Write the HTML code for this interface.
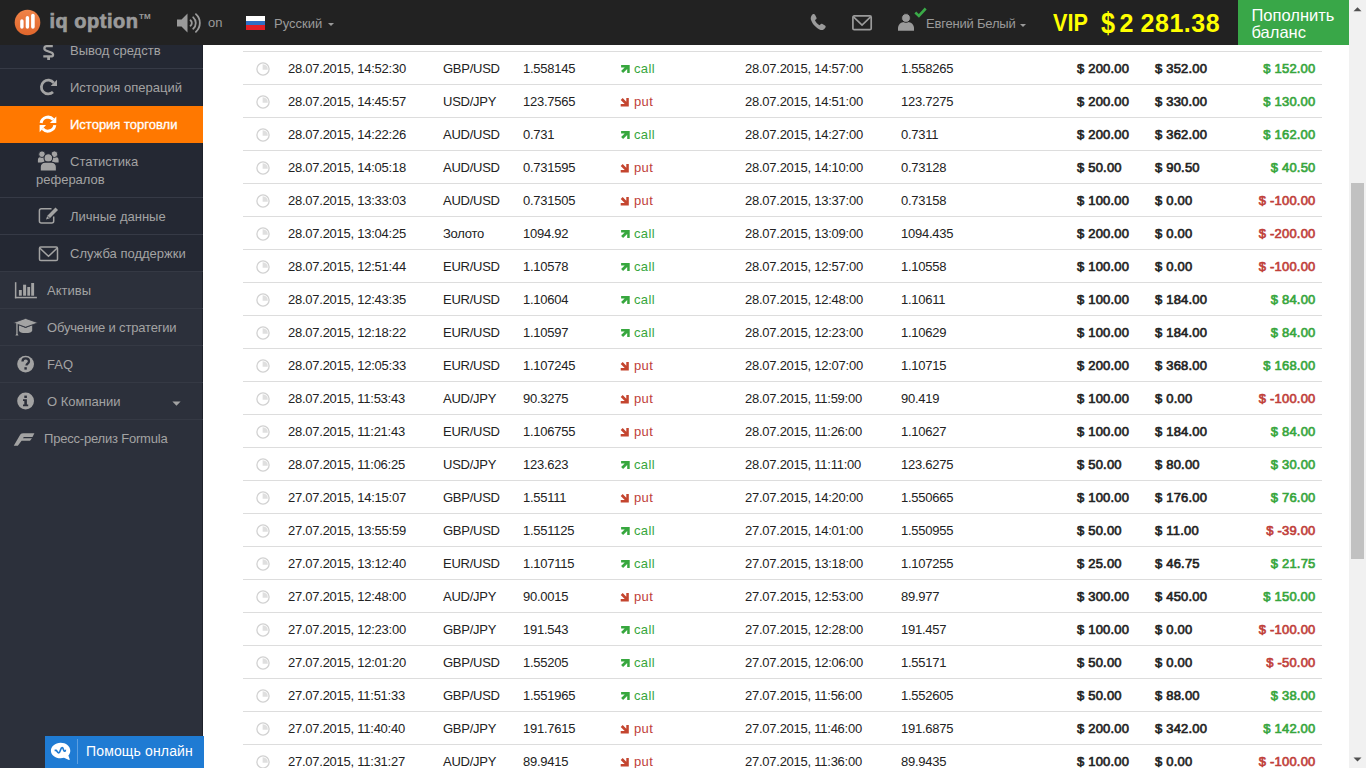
<!DOCTYPE html>
<html><head><meta charset="utf-8">
<style>
*{margin:0;padding:0;box-sizing:border-box}
html,body{width:1366px;height:768px;overflow:hidden;background:#fff;font-family:"Liberation Sans",sans-serif}
.abs{position:absolute}
.hd{font-size:13px;color:#9a9a9a;white-space:nowrap;line-height:16px}
.caret{width:0;height:0;border-left:3.5px solid transparent;border-right:3.5px solid transparent;border-top:3.5px solid #9a9a9a}
#hdr{position:absolute;left:0;top:0;width:1349px;height:45px;background:#222222}
#sb{position:absolute;left:0;top:45px;width:203px;height:723px;background:#2c303b;overflow:hidden;box-shadow:inset -1px 0 0 #1e212a}
.si{position:absolute;left:0;width:202px;color:#a3a3a3;font-size:13px;white-space:nowrap}
.sub{background:#242833}
.ln{position:absolute;left:0;width:203px;height:1px}
.lbl{position:absolute;white-space:nowrap}
#scroll{position:absolute;left:1349px;top:0;width:17px;height:768px;background:#f1f1f1}
.tr{position:absolute;left:243px;width:1079px;height:33px;border-top:1px solid #dddddd;font-size:13px;color:#222}
.tr span{position:absolute;top:9px;white-space:nowrap;letter-spacing:-0.25px;line-height:16px}
.tr .ck{position:absolute;left:12.6px;top:10.2px}
.tr .ar{position:absolute;left:377px;top:10px}
.c1{left:45px}.c2{left:200px}.c3{left:280px}.tr .c4{left:391px;letter-spacing:0.35px}.c5{left:502px}.c6{left:658px}
.tr .c7,.tr .c8,.tr .c9{-webkit-text-stroke:0.65px currentColor;letter-spacing:0.2px}.c7{left:834px}.c8{left:912px}.c9{right:6.5px}
.g{color:#37a63d}.r{color:#c0403a}
</style></head><body>
<div id="main">
<div class="tr" style="top:51px"><svg class="ck" width="14" height="14" viewBox="0 0 14 14"><circle cx="7" cy="7" r="6.1" fill="none" stroke="#d2d2d2" stroke-width="1.3"/><path d="M6.6 2.3V7.7H11.8A5 5 0 0 0 6.6 2.3z" fill="#dfdfdf"/></svg><span class="c1">28.07.2015, 14:52:30</span><span class="c2">GBP/USD</span><span class="c3">1.558145</span><svg class="ar" width="12" height="14" viewBox="0 0 12 14"><path d="M1.1 3H9.7V11.1H7.2V7L3.1 11.1 1.1 9.1 4.7 5.5H1.1z" fill="#37a73e"/></svg><span class="c4 g">call</span><span class="c5">28.07.2015, 14:57:00</span><span class="c6">1.558265</span><span class="c7">$ 200.00</span><span class="c8">$ 352.00</span><span class="c9 g">$ 152.00</span></div>
<div class="tr" style="top:84px"><svg class="ck" width="14" height="14" viewBox="0 0 14 14"><circle cx="7" cy="7" r="6.1" fill="none" stroke="#d2d2d2" stroke-width="1.3"/><path d="M6.6 2.3V7.7H11.8A5 5 0 0 0 6.6 2.3z" fill="#dfdfdf"/></svg><span class="c1">28.07.2015, 14:45:57</span><span class="c2">USD/JPY</span><span class="c3">123.7565</span><svg class="ar" width="12" height="14" viewBox="0 0 12 14"><path d="M0.7 11.6H8.8V3.1H6.3V6.7L2.7 3.1 0.7 5.1 4.7 9.1H0.7z" fill="#c4452f"/></svg><span class="c4 r">put</span><span class="c5">28.07.2015, 14:51:00</span><span class="c6">123.7275</span><span class="c7">$ 200.00</span><span class="c8">$ 330.00</span><span class="c9 g">$ 130.00</span></div>
<div class="tr" style="top:117px"><svg class="ck" width="14" height="14" viewBox="0 0 14 14"><circle cx="7" cy="7" r="6.1" fill="none" stroke="#d2d2d2" stroke-width="1.3"/><path d="M6.6 2.3V7.7H11.8A5 5 0 0 0 6.6 2.3z" fill="#dfdfdf"/></svg><span class="c1">28.07.2015, 14:22:26</span><span class="c2">AUD/USD</span><span class="c3">0.731</span><svg class="ar" width="12" height="14" viewBox="0 0 12 14"><path d="M1.1 3H9.7V11.1H7.2V7L3.1 11.1 1.1 9.1 4.7 5.5H1.1z" fill="#37a73e"/></svg><span class="c4 g">call</span><span class="c5">28.07.2015, 14:27:00</span><span class="c6">0.7311</span><span class="c7">$ 200.00</span><span class="c8">$ 362.00</span><span class="c9 g">$ 162.00</span></div>
<div class="tr" style="top:150px"><svg class="ck" width="14" height="14" viewBox="0 0 14 14"><circle cx="7" cy="7" r="6.1" fill="none" stroke="#d2d2d2" stroke-width="1.3"/><path d="M6.6 2.3V7.7H11.8A5 5 0 0 0 6.6 2.3z" fill="#dfdfdf"/></svg><span class="c1">28.07.2015, 14:05:18</span><span class="c2">AUD/USD</span><span class="c3">0.731595</span><svg class="ar" width="12" height="14" viewBox="0 0 12 14"><path d="M0.7 11.6H8.8V3.1H6.3V6.7L2.7 3.1 0.7 5.1 4.7 9.1H0.7z" fill="#c4452f"/></svg><span class="c4 r">put</span><span class="c5">28.07.2015, 14:10:00</span><span class="c6">0.73128</span><span class="c7">$ 50.00</span><span class="c8">$ 90.50</span><span class="c9 g">$ 40.50</span></div>
<div class="tr" style="top:183px"><svg class="ck" width="14" height="14" viewBox="0 0 14 14"><circle cx="7" cy="7" r="6.1" fill="none" stroke="#d2d2d2" stroke-width="1.3"/><path d="M6.6 2.3V7.7H11.8A5 5 0 0 0 6.6 2.3z" fill="#dfdfdf"/></svg><span class="c1">28.07.2015, 13:33:03</span><span class="c2">AUD/USD</span><span class="c3">0.731505</span><svg class="ar" width="12" height="14" viewBox="0 0 12 14"><path d="M0.7 11.6H8.8V3.1H6.3V6.7L2.7 3.1 0.7 5.1 4.7 9.1H0.7z" fill="#c4452f"/></svg><span class="c4 r">put</span><span class="c5">28.07.2015, 13:37:00</span><span class="c6">0.73158</span><span class="c7">$ 100.00</span><span class="c8">$ 0.00</span><span class="c9 r">$ -100.00</span></div>
<div class="tr" style="top:216px"><svg class="ck" width="14" height="14" viewBox="0 0 14 14"><circle cx="7" cy="7" r="6.1" fill="none" stroke="#d2d2d2" stroke-width="1.3"/><path d="M6.6 2.3V7.7H11.8A5 5 0 0 0 6.6 2.3z" fill="#dfdfdf"/></svg><span class="c1">28.07.2015, 13:04:25</span><span class="c2">Золото</span><span class="c3">1094.92</span><svg class="ar" width="12" height="14" viewBox="0 0 12 14"><path d="M1.1 3H9.7V11.1H7.2V7L3.1 11.1 1.1 9.1 4.7 5.5H1.1z" fill="#37a73e"/></svg><span class="c4 g">call</span><span class="c5">28.07.2015, 13:09:00</span><span class="c6">1094.435</span><span class="c7">$ 200.00</span><span class="c8">$ 0.00</span><span class="c9 r">$ -200.00</span></div>
<div class="tr" style="top:249px"><svg class="ck" width="14" height="14" viewBox="0 0 14 14"><circle cx="7" cy="7" r="6.1" fill="none" stroke="#d2d2d2" stroke-width="1.3"/><path d="M6.6 2.3V7.7H11.8A5 5 0 0 0 6.6 2.3z" fill="#dfdfdf"/></svg><span class="c1">28.07.2015, 12:51:44</span><span class="c2">EUR/USD</span><span class="c3">1.10578</span><svg class="ar" width="12" height="14" viewBox="0 0 12 14"><path d="M1.1 3H9.7V11.1H7.2V7L3.1 11.1 1.1 9.1 4.7 5.5H1.1z" fill="#37a73e"/></svg><span class="c4 g">call</span><span class="c5">28.07.2015, 12:57:00</span><span class="c6">1.10558</span><span class="c7">$ 100.00</span><span class="c8">$ 0.00</span><span class="c9 r">$ -100.00</span></div>
<div class="tr" style="top:282px"><svg class="ck" width="14" height="14" viewBox="0 0 14 14"><circle cx="7" cy="7" r="6.1" fill="none" stroke="#d2d2d2" stroke-width="1.3"/><path d="M6.6 2.3V7.7H11.8A5 5 0 0 0 6.6 2.3z" fill="#dfdfdf"/></svg><span class="c1">28.07.2015, 12:43:35</span><span class="c2">EUR/USD</span><span class="c3">1.10604</span><svg class="ar" width="12" height="14" viewBox="0 0 12 14"><path d="M1.1 3H9.7V11.1H7.2V7L3.1 11.1 1.1 9.1 4.7 5.5H1.1z" fill="#37a73e"/></svg><span class="c4 g">call</span><span class="c5">28.07.2015, 12:48:00</span><span class="c6">1.10611</span><span class="c7">$ 100.00</span><span class="c8">$ 184.00</span><span class="c9 g">$ 84.00</span></div>
<div class="tr" style="top:315px"><svg class="ck" width="14" height="14" viewBox="0 0 14 14"><circle cx="7" cy="7" r="6.1" fill="none" stroke="#d2d2d2" stroke-width="1.3"/><path d="M6.6 2.3V7.7H11.8A5 5 0 0 0 6.6 2.3z" fill="#dfdfdf"/></svg><span class="c1">28.07.2015, 12:18:22</span><span class="c2">EUR/USD</span><span class="c3">1.10597</span><svg class="ar" width="12" height="14" viewBox="0 0 12 14"><path d="M1.1 3H9.7V11.1H7.2V7L3.1 11.1 1.1 9.1 4.7 5.5H1.1z" fill="#37a73e"/></svg><span class="c4 g">call</span><span class="c5">28.07.2015, 12:23:00</span><span class="c6">1.10629</span><span class="c7">$ 100.00</span><span class="c8">$ 184.00</span><span class="c9 g">$ 84.00</span></div>
<div class="tr" style="top:348px"><svg class="ck" width="14" height="14" viewBox="0 0 14 14"><circle cx="7" cy="7" r="6.1" fill="none" stroke="#d2d2d2" stroke-width="1.3"/><path d="M6.6 2.3V7.7H11.8A5 5 0 0 0 6.6 2.3z" fill="#dfdfdf"/></svg><span class="c1">28.07.2015, 12:05:33</span><span class="c2">EUR/USD</span><span class="c3">1.107245</span><svg class="ar" width="12" height="14" viewBox="0 0 12 14"><path d="M0.7 11.6H8.8V3.1H6.3V6.7L2.7 3.1 0.7 5.1 4.7 9.1H0.7z" fill="#c4452f"/></svg><span class="c4 r">put</span><span class="c5">28.07.2015, 12:07:00</span><span class="c6">1.10715</span><span class="c7">$ 200.00</span><span class="c8">$ 368.00</span><span class="c9 g">$ 168.00</span></div>
<div class="tr" style="top:381px"><svg class="ck" width="14" height="14" viewBox="0 0 14 14"><circle cx="7" cy="7" r="6.1" fill="none" stroke="#d2d2d2" stroke-width="1.3"/><path d="M6.6 2.3V7.7H11.8A5 5 0 0 0 6.6 2.3z" fill="#dfdfdf"/></svg><span class="c1">28.07.2015, 11:53:43</span><span class="c2">AUD/JPY</span><span class="c3">90.3275</span><svg class="ar" width="12" height="14" viewBox="0 0 12 14"><path d="M0.7 11.6H8.8V3.1H6.3V6.7L2.7 3.1 0.7 5.1 4.7 9.1H0.7z" fill="#c4452f"/></svg><span class="c4 r">put</span><span class="c5">28.07.2015, 11:59:00</span><span class="c6">90.419</span><span class="c7">$ 100.00</span><span class="c8">$ 0.00</span><span class="c9 r">$ -100.00</span></div>
<div class="tr" style="top:414px"><svg class="ck" width="14" height="14" viewBox="0 0 14 14"><circle cx="7" cy="7" r="6.1" fill="none" stroke="#d2d2d2" stroke-width="1.3"/><path d="M6.6 2.3V7.7H11.8A5 5 0 0 0 6.6 2.3z" fill="#dfdfdf"/></svg><span class="c1">28.07.2015, 11:21:43</span><span class="c2">EUR/USD</span><span class="c3">1.106755</span><svg class="ar" width="12" height="14" viewBox="0 0 12 14"><path d="M0.7 11.6H8.8V3.1H6.3V6.7L2.7 3.1 0.7 5.1 4.7 9.1H0.7z" fill="#c4452f"/></svg><span class="c4 r">put</span><span class="c5">28.07.2015, 11:26:00</span><span class="c6">1.10627</span><span class="c7">$ 100.00</span><span class="c8">$ 184.00</span><span class="c9 g">$ 84.00</span></div>
<div class="tr" style="top:447px"><svg class="ck" width="14" height="14" viewBox="0 0 14 14"><circle cx="7" cy="7" r="6.1" fill="none" stroke="#d2d2d2" stroke-width="1.3"/><path d="M6.6 2.3V7.7H11.8A5 5 0 0 0 6.6 2.3z" fill="#dfdfdf"/></svg><span class="c1">28.07.2015, 11:06:25</span><span class="c2">USD/JPY</span><span class="c3">123.623</span><svg class="ar" width="12" height="14" viewBox="0 0 12 14"><path d="M1.1 3H9.7V11.1H7.2V7L3.1 11.1 1.1 9.1 4.7 5.5H1.1z" fill="#37a73e"/></svg><span class="c4 g">call</span><span class="c5">28.07.2015, 11:11:00</span><span class="c6">123.6275</span><span class="c7">$ 50.00</span><span class="c8">$ 80.00</span><span class="c9 g">$ 30.00</span></div>
<div class="tr" style="top:480px"><svg class="ck" width="14" height="14" viewBox="0 0 14 14"><circle cx="7" cy="7" r="6.1" fill="none" stroke="#d2d2d2" stroke-width="1.3"/><path d="M6.6 2.3V7.7H11.8A5 5 0 0 0 6.6 2.3z" fill="#dfdfdf"/></svg><span class="c1">27.07.2015, 14:15:07</span><span class="c2">GBP/USD</span><span class="c3">1.55111</span><svg class="ar" width="12" height="14" viewBox="0 0 12 14"><path d="M0.7 11.6H8.8V3.1H6.3V6.7L2.7 3.1 0.7 5.1 4.7 9.1H0.7z" fill="#c4452f"/></svg><span class="c4 r">put</span><span class="c5">27.07.2015, 14:20:00</span><span class="c6">1.550665</span><span class="c7">$ 100.00</span><span class="c8">$ 176.00</span><span class="c9 g">$ 76.00</span></div>
<div class="tr" style="top:513px"><svg class="ck" width="14" height="14" viewBox="0 0 14 14"><circle cx="7" cy="7" r="6.1" fill="none" stroke="#d2d2d2" stroke-width="1.3"/><path d="M6.6 2.3V7.7H11.8A5 5 0 0 0 6.6 2.3z" fill="#dfdfdf"/></svg><span class="c1">27.07.2015, 13:55:59</span><span class="c2">GBP/USD</span><span class="c3">1.551125</span><svg class="ar" width="12" height="14" viewBox="0 0 12 14"><path d="M1.1 3H9.7V11.1H7.2V7L3.1 11.1 1.1 9.1 4.7 5.5H1.1z" fill="#37a73e"/></svg><span class="c4 g">call</span><span class="c5">27.07.2015, 14:01:00</span><span class="c6">1.550955</span><span class="c7">$ 50.00</span><span class="c8">$ 11.00</span><span class="c9 r">$ -39.00</span></div>
<div class="tr" style="top:546px"><svg class="ck" width="14" height="14" viewBox="0 0 14 14"><circle cx="7" cy="7" r="6.1" fill="none" stroke="#d2d2d2" stroke-width="1.3"/><path d="M6.6 2.3V7.7H11.8A5 5 0 0 0 6.6 2.3z" fill="#dfdfdf"/></svg><span class="c1">27.07.2015, 13:12:40</span><span class="c2">EUR/USD</span><span class="c3">1.107115</span><svg class="ar" width="12" height="14" viewBox="0 0 12 14"><path d="M1.1 3H9.7V11.1H7.2V7L3.1 11.1 1.1 9.1 4.7 5.5H1.1z" fill="#37a73e"/></svg><span class="c4 g">call</span><span class="c5">27.07.2015, 13:18:00</span><span class="c6">1.107255</span><span class="c7">$ 25.00</span><span class="c8">$ 46.75</span><span class="c9 g">$ 21.75</span></div>
<div class="tr" style="top:579px"><svg class="ck" width="14" height="14" viewBox="0 0 14 14"><circle cx="7" cy="7" r="6.1" fill="none" stroke="#d2d2d2" stroke-width="1.3"/><path d="M6.6 2.3V7.7H11.8A5 5 0 0 0 6.6 2.3z" fill="#dfdfdf"/></svg><span class="c1">27.07.2015, 12:48:00</span><span class="c2">AUD/JPY</span><span class="c3">90.0015</span><svg class="ar" width="12" height="14" viewBox="0 0 12 14"><path d="M0.7 11.6H8.8V3.1H6.3V6.7L2.7 3.1 0.7 5.1 4.7 9.1H0.7z" fill="#c4452f"/></svg><span class="c4 r">put</span><span class="c5">27.07.2015, 12:53:00</span><span class="c6">89.977</span><span class="c7">$ 300.00</span><span class="c8">$ 450.00</span><span class="c9 g">$ 150.00</span></div>
<div class="tr" style="top:612px"><svg class="ck" width="14" height="14" viewBox="0 0 14 14"><circle cx="7" cy="7" r="6.1" fill="none" stroke="#d2d2d2" stroke-width="1.3"/><path d="M6.6 2.3V7.7H11.8A5 5 0 0 0 6.6 2.3z" fill="#dfdfdf"/></svg><span class="c1">27.07.2015, 12:23:00</span><span class="c2">GBP/JPY</span><span class="c3">191.543</span><svg class="ar" width="12" height="14" viewBox="0 0 12 14"><path d="M1.1 3H9.7V11.1H7.2V7L3.1 11.1 1.1 9.1 4.7 5.5H1.1z" fill="#37a73e"/></svg><span class="c4 g">call</span><span class="c5">27.07.2015, 12:28:00</span><span class="c6">191.457</span><span class="c7">$ 100.00</span><span class="c8">$ 0.00</span><span class="c9 r">$ -100.00</span></div>
<div class="tr" style="top:645px"><svg class="ck" width="14" height="14" viewBox="0 0 14 14"><circle cx="7" cy="7" r="6.1" fill="none" stroke="#d2d2d2" stroke-width="1.3"/><path d="M6.6 2.3V7.7H11.8A5 5 0 0 0 6.6 2.3z" fill="#dfdfdf"/></svg><span class="c1">27.07.2015, 12:01:20</span><span class="c2">GBP/USD</span><span class="c3">1.55205</span><svg class="ar" width="12" height="14" viewBox="0 0 12 14"><path d="M1.1 3H9.7V11.1H7.2V7L3.1 11.1 1.1 9.1 4.7 5.5H1.1z" fill="#37a73e"/></svg><span class="c4 g">call</span><span class="c5">27.07.2015, 12:06:00</span><span class="c6">1.55171</span><span class="c7">$ 50.00</span><span class="c8">$ 0.00</span><span class="c9 r">$ -50.00</span></div>
<div class="tr" style="top:678px"><svg class="ck" width="14" height="14" viewBox="0 0 14 14"><circle cx="7" cy="7" r="6.1" fill="none" stroke="#d2d2d2" stroke-width="1.3"/><path d="M6.6 2.3V7.7H11.8A5 5 0 0 0 6.6 2.3z" fill="#dfdfdf"/></svg><span class="c1">27.07.2015, 11:51:33</span><span class="c2">GBP/USD</span><span class="c3">1.551965</span><svg class="ar" width="12" height="14" viewBox="0 0 12 14"><path d="M1.1 3H9.7V11.1H7.2V7L3.1 11.1 1.1 9.1 4.7 5.5H1.1z" fill="#37a73e"/></svg><span class="c4 g">call</span><span class="c5">27.07.2015, 11:56:00</span><span class="c6">1.552605</span><span class="c7">$ 50.00</span><span class="c8">$ 88.00</span><span class="c9 g">$ 38.00</span></div>
<div class="tr" style="top:711px"><svg class="ck" width="14" height="14" viewBox="0 0 14 14"><circle cx="7" cy="7" r="6.1" fill="none" stroke="#d2d2d2" stroke-width="1.3"/><path d="M6.6 2.3V7.7H11.8A5 5 0 0 0 6.6 2.3z" fill="#dfdfdf"/></svg><span class="c1">27.07.2015, 11:40:40</span><span class="c2">GBP/JPY</span><span class="c3">191.7615</span><svg class="ar" width="12" height="14" viewBox="0 0 12 14"><path d="M0.7 11.6H8.8V3.1H6.3V6.7L2.7 3.1 0.7 5.1 4.7 9.1H0.7z" fill="#c4452f"/></svg><span class="c4 r">put</span><span class="c5">27.07.2015, 11:46:00</span><span class="c6">191.6875</span><span class="c7">$ 200.00</span><span class="c8">$ 342.00</span><span class="c9 g">$ 142.00</span></div>
<div class="tr" style="top:744px"><svg class="ck" width="14" height="14" viewBox="0 0 14 14"><circle cx="7" cy="7" r="6.1" fill="none" stroke="#d2d2d2" stroke-width="1.3"/><path d="M6.6 2.3V7.7H11.8A5 5 0 0 0 6.6 2.3z" fill="#dfdfdf"/></svg><span class="c1">27.07.2015, 11:31:27</span><span class="c2">AUD/JPY</span><span class="c3">89.9415</span><svg class="ar" width="12" height="14" viewBox="0 0 12 14"><path d="M0.7 11.6H8.8V3.1H6.3V6.7L2.7 3.1 0.7 5.1 4.7 9.1H0.7z" fill="#c4452f"/></svg><span class="c4 r">put</span><span class="c5">27.07.2015, 11:36:00</span><span class="c6">89.9435</span><span class="c7">$ 100.00</span><span class="c8">$ 0.00</span><span class="c9 r">$ -100.00</span></div>
</div>

<div id="sb">
  <!-- submenu section -->
  <div class="si sub" style="top:-14px;height:37px"><span class="lbl" style="left:70px;top:12px">Вывод средств</span></div>
  <div class="ln" style="top:23px;background:#363a46"></div>
  <div class="si sub" style="top:24px;height:37px"><span class="lbl" style="left:70px;top:11px">История операций</span></div>
  <div class="si" style="top:61px;width:203px;height:37px;background:#ff7800;color:#fff"><span class="lbl" style="left:70px;top:11px;-webkit-text-stroke:0.3px #fff">История торговли</span></div>
  <div class="si sub" style="top:98px;height:54px"><span class="lbl" style="left:70px;top:11px">Статистика</span><span class="lbl" style="left:36px;top:29px">рефералов</span></div>
  <div class="ln" style="top:152px;background:#363a46"></div>
  <div class="si sub" style="top:153px;height:36px"><span class="lbl" style="left:70px;top:11px">Личные данные</span></div>
  <div class="ln" style="top:189px;background:#363a46"></div>
  <div class="si sub" style="top:190px;height:36px"><span class="lbl" style="left:70px;top:11px">Служба поддержки</span></div>
  <!-- main section -->
  <div class="ln" style="top:226px;background:#353944"></div>
  <div class="si" style="top:227px;height:36px"><span class="lbl" style="left:47px;top:11px">Активы</span></div>
  <div class="ln" style="top:263px;background:#353944"></div>
  <div class="si" style="top:264px;height:36px"><span class="lbl" style="left:47px;top:11px;letter-spacing:-0.17px">Обучение и стратегии</span></div>
  <div class="ln" style="top:300px;background:#353944"></div>
  <div class="si" style="top:301px;height:36px"><span class="lbl" style="left:47px;top:11px">FAQ</span></div>
  <div class="ln" style="top:337px;background:#353944"></div>
  <div class="si" style="top:338px;height:36px"><span class="lbl" style="left:47px;top:11px">О Компании</span></div>
  <div class="ln" style="top:374px;background:#353944"></div>
  <div class="si" style="top:375px;height:36px"><span class="lbl" style="left:44px;top:11px;letter-spacing:-0.2px">Пресс-релиз Formula</span></div>
</div>
<svg class="abs" style="left:0;top:0" width="203" height="768" viewBox="0 0 203 768">
  <g fill="#a3a3a3">
  <!-- $ -->
  <path d="M52.8 46.2H46.6C44 46.2 43.6 49.6 45.9 50.5L51.2 52.5C53.9 53.5 53.6 56.4 50.8 56.4H43.3" fill="none" stroke="#a3a3a3" stroke-width="2.3"/>
  <rect x="47.2" y="56" width="2.8" height="4"/>
  <!-- repeat -->
  <path d="M13.9 4.1A6.9 6.9 0 1 0 13.2 13.4" transform="translate(39.8,78.7)" fill="none" stroke="#a3a3a3" stroke-width="2.8"/>
  <path d="M57 79.8V86H50.7z"/>
  <!-- users -->
  <path d="M37.9 162.5v-2.6a3 3 0 0 1 3-3h3.6v5.6z M58.6 162.5v-2.6a3 3 0 0 0-3-3h-3.6v5.6z"/>
  <circle cx="42" cy="154.2" r="3.3" stroke="#242833" stroke-width="0.9"/><circle cx="54.4" cy="154.2" r="3.3" stroke="#242833" stroke-width="0.9"/>
  <circle cx="48.3" cy="158" r="4.3" stroke="#242833" stroke-width="1.1"/>
  <path d="M40.2 171.1v-4.2a4.8 4.8 0 0 1 4.8-4.8h6.6a4.8 4.8 0 0 1 4.8 4.8v4.2z" stroke="#242833" stroke-width="1.1"/>
  <!-- pencil square -->
  <path d="M51.5 208.8H41.4a2 2 0 0 0-2 2v10.1a2 2 0 0 0 2 2h10.3a2 2 0 0 0 2-2v-4.3" fill="none" stroke="#a3a3a3" stroke-width="1.5"/>
  <path d="M55.5 207.5l2.5 2.5-8.2 8.2-3.8 1.3 1.3-3.8z"/>
  <path d="M47.6 216.2l2 2" stroke="#242833" stroke-width="0.9"/>
  <!-- mail -->
  <rect x="39.5" y="247" width="18" height="13.5" rx="1.3" fill="none" stroke="#a3a3a3" stroke-width="1.5"/>
  <path d="M40 248.3l8.5 8 8.5-8" fill="none" stroke="#a3a3a3" stroke-width="1.5"/>
  <!-- bar chart -->
  <rect x="14.9" y="282.2" width="1.5" height="16.1"/><rect x="14.9" y="296.8" width="22" height="1.5"/>
  <rect x="18.9" y="290" width="2.9" height="5.7"/><rect x="23.1" y="284.7" width="3" height="11"/>
  <rect x="27.3" y="287" width="2.8" height="8.7"/><rect x="31.2" y="283" width="2.9" height="12.7"/>
  <!-- graduation cap -->
  <path d="M19 325.2v5.3c0 1.6 3 2.6 6.6 2.6s6.6-1 6.6-2.6v-5.3l-6.6 2.8z"/>
  <path d="M13.2 322.8L25.6 318.4 38.1 322.8 25.6 327.2z" stroke="#2c303b" stroke-width="0.8"/>
  <path d="M16.3 323.2h1.3v10.5l.9 1.8h-3.1l.9-1.8z"/>
  <!-- FAQ circle -->
  <circle cx="25.6" cy="364.1" r="8.4"/>
  <circle cx="25.6" cy="401" r="8.4"/>
  <!-- F -->
  <path d="M13.75 445.8L20.3 434.6Q21.4 433.2 23.4 433.2H34.4L32.5 436.9H23.75L23 438.2H32L30 440.8H21.6L17.8 445.8z"/>
  </g>
  <!-- ? -->
  <path d="M22.5 361.6c0-2 1.4-3.2 3.2-3.2 1.9 0 3.3 1.2 3.3 2.9 0 2.3-2.5 2.4-2.5 4.2" fill="none" stroke="#2c2f3a" stroke-width="2.3"/>
  <rect x="24.4" y="367.2" width="2.4" height="2.4" fill="#2c2f3a"/>
  <!-- i -->
  <rect x="24.3" y="395.6" width="2.6" height="2.4" fill="#2c2f3a"/>
  <path d="M23 399.3h3.9v5.2h1.3v1.8h-5.2v-1.8h1.3v-3.4H23z" fill="#2c2f3a"/>
  <!-- refresh (white, orange row) -->
  <g transform="translate(39.6,115.9)" fill="#fff">
    <path d="M1.5 7A7 7 0 0 1 13.6 3.6" fill="none" stroke="#fff" stroke-width="3"/>
    <path d="M16.7 0.6V7H10.3z"/>
    <path d="M15.2 9.2A7 7 0 0 1 3.1 12.9" fill="none" stroke="#fff" stroke-width="3"/>
    <path d="M0 16.3V9.2H6.4z"/>
  </g>
  <!-- caret О Компании -->
  <path d="M172.4 401.6h8.2l-4.1 4.1z" fill="#a3a3a3"/>
</svg>



<div id="hdr">
  <!-- logo -->
  <svg class="abs" style="left:14px;top:9px" width="27" height="27" viewBox="0 0 27 27">
    <defs><linearGradient id="lg" x1="0" y1="0" x2="0" y2="1"><stop offset="0" stop-color="#f08448"/><stop offset="1" stop-color="#e0662c"/></linearGradient></defs>
    <circle cx="13.5" cy="13.5" r="12.8" fill="url(#lg)"/>
    <rect x="6.2" y="10.3" width="3.4" height="9.4" rx="1.7" fill="#fff"/>
    <rect x="11.7" y="7" width="3.4" height="12.7" rx="1.7" fill="#fff"/>
    <rect x="17.1" y="4.8" width="3.6" height="14.9" rx="1.8" fill="#fff"/>
  </svg>
  <div class="abs" style="left:49.5px;top:10px;font-size:20px;line-height:23px;font-weight:bold;color:#9a9a9a;letter-spacing:0.5px;-webkit-text-stroke:0.7px #9a9a9a;white-space:nowrap">iq option</div>
  <div class="abs" style="left:139px;top:12px;font-size:8px;font-weight:bold;color:#9a9a9a;white-space:nowrap">TM</div>
  <!-- speaker -->
  <svg class="abs" style="left:176px;top:12px" width="26" height="22" viewBox="0 0 26 22">
    <path d="M1 7.5h4.5L11.5 1.5v19L5.5 14.5H1z" fill="#9a9a9a"/>
    <path d="M14.5 8.2a3.6 3.6 0 0 1 0 5.6" fill="none" stroke="#9a9a9a" stroke-width="1.8" stroke-linecap="round"/>
    <path d="M17.2 5.3a7.6 7.6 0 0 1 0 11.4" fill="none" stroke="#9a9a9a" stroke-width="1.8" stroke-linecap="round"/>
    <path d="M19.9 2.2a11.8 11.8 0 0 1 0 17.6" fill="none" stroke="#9a9a9a" stroke-width="1.8" stroke-linecap="round"/>
  </svg>
  <div class="abs hd" style="left:208px;top:15px">on</div>
  <!-- flag -->
  <div class="abs" style="left:246px;top:15.5px;width:19px;height:14px;background:linear-gradient(#fff 0,#fff 33%,#2f6ec4 33%,#2f6ec4 66%,#e41d25 66%)"></div>
  <div class="abs hd" style="left:274px;top:16px">Русский</div>
  <div class="abs caret" style="left:328px;top:23px"></div>
  <!-- phone -->
  <svg class="abs" style="left:808.5px;top:12.5px" width="18" height="17" viewBox="0 0 16.4 15.9">
    <path d="M3.2 1.2c.9-.6 1.8-.3 2.2.5l1.3 2.4c.4.8.1 1.5-.5 1.9l-.9.6c.7 1.8 2.4 3.8 4.4 4.9l.7-.8c.5-.6 1.3-.7 2-.3l2.3 1.4c.8.5.9 1.4.3 2.1l-.9 1.1c-.8.9-2.1 1.3-3.4.8C6.6 14.3 2.9 10.3 1.6 6.3 1.2 5 1.4 3.6 2.2 2.3z" fill="#9a9a9a"/>
  </svg>
  <!-- mail -->
  <svg class="abs" style="left:852px;top:14px" width="21" height="17" viewBox="0 0 21 17">
    <rect x="0.9" y="1.9" width="18.3" height="13.8" rx="1.3" fill="none" stroke="#9a9a9a" stroke-width="1.7"/>
    <path d="M1.5 2.8l8.55 8.2 8.55-8.2" fill="none" stroke="#9a9a9a" stroke-width="1.7"/>
  </svg>
  <!-- user -->
  <svg class="abs" style="left:897px;top:13px" width="18" height="18" viewBox="0 0 18 18">
    <path d="M1 17.7v-2.6c0-3.4 2.8-6.2 6.2-6.2h3.6c3.4 0 6.2 2.8 6.2 6.2v2.6z" fill="#9a9a9a"/>
    <circle cx="9" cy="5" r="4.4" fill="#9a9a9a" stroke="#222" stroke-width="0.9"/>
  </svg>
  <svg class="abs" style="left:914px;top:7px" width="13" height="11" viewBox="0 0 13 11">
    <path d="M1.3 5.5l3.6 3.4 6.8-7.4" fill="none" stroke="#3aaa48" stroke-width="2.6"/>
  </svg>
  <div class="abs hd" style="left:926px;top:16px;letter-spacing:-0.2px">Евгений Белый</div>
  <div class="abs caret" style="left:1020px;top:23.5px"></div>
  <!-- balance -->
  <div class="abs" style="left:1053px;top:10px;font-size:23.5px;font-weight:bold;color:#ffff00;white-space:nowrap;transform:scaleX(0.92);transform-origin:0 0">VIP</div>
  <div class="abs" style="left:1101px;top:6px;font-size:30px;line-height:34px;font-weight:bold;color:#ffff00;white-space:nowrap;transform:scaleX(0.84);transform-origin:0 0">$</div>
  <div class="abs" style="left:1119.5px;top:9px;font-size:25px;font-weight:bold;color:#ffff00;white-space:nowrap">2</div>
  <div class="abs" style="left:1140.5px;top:9px;font-size:25px;font-weight:bold;color:#ffff00;white-space:nowrap;letter-spacing:0.55px">281.38</div>
  <!-- button -->
  <div class="abs" style="left:1238px;top:0;width:111px;height:45px;background:#39a748"></div>
  <div class="abs" style="left:1251.5px;top:7px;font-size:16.5px;line-height:16.5px;color:#fff;white-space:nowrap">Пополнить<br>баланс</div>
</div>
<div class="abs" style="left:45px;top:736px;width:159px;height:32px;background:#1f7bd3">
  <svg class="abs" style="left:0;top:0" width="40" height="32" viewBox="0 0 40 32">
    <path d="M15.6 6.8c5.4 0 9.7 3.4 9.7 7.9 0 1.8-.7 3.4-1.9 4.7l1.3 3.9c.2.5-.3.8-.7.6l-5-2.1c-1.1.3-2.2.5-3.4.5-5.4 0-9.7-3.4-9.7-7.6s4.3-7.9 9.7-7.9z" fill="#fff"/>
    <path d="M9.6 14.4h1.6c.6 0 .9 2.4 2.4 2.4 2 0 1.6-5.2 3.6-5.2 1.3 0 1.1 3.6 2.3 3.6.6 0 .8-.8 1.6-.8" fill="none" stroke="#1f7bd3" stroke-width="1.7"/>
    <rect x="32" y="3" width="1" height="25" fill="#5d9fe0"/>
  </svg>
  <div class="abs" style="left:41px;top:7px;font-size:14px;color:#fff;white-space:nowrap;line-height:16px;letter-spacing:0.15px">Помощь онлайн</div>
</div>
<div id="scroll">
  <div class="abs" style="left:2px;top:183px;width:13px;height:376px;background:#c1c1c1"></div>
  <svg class="abs" style="left:0;top:0" width="17" height="17" viewBox="0 0 17 17"><path d="M4.5 11.2h8l-4-4z" fill="#505050"/></svg>
  <svg class="abs" style="left:0;top:751px" width="17" height="17" viewBox="0 0 17 17"><path d="M4.5 6.5h8l-4 4z" fill="#505050"/></svg>
</div>
</body></html>
